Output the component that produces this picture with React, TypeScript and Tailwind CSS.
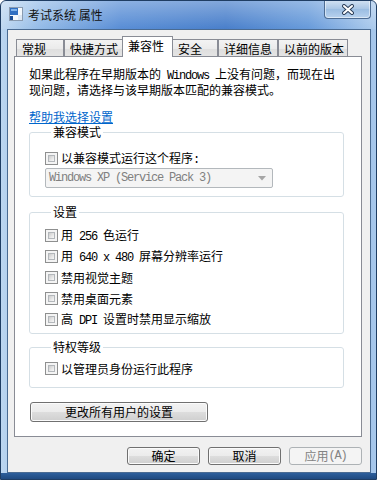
import type { ReactNode } from "react";

// Half-width ascii, like SimSun's latin glyphs (6px advance at 12px)
function M({ children }: { children: ReactNode }) {
	return <span className="font-['Liberation_Mono',monospace] tracking-[-1.2px]">{children}</span>;
}

function CheckBox() {
	return (
		<div className="h-[13px] w-[13px] shrink-0 border border-[#8e8f8f] bg-[#f4f4f4] p-[2px]">
			<div className="h-full w-full border border-[#b3b7bb] bg-[linear-gradient(135deg,#cbcbcb_0%,#e6e6e6_55%,#f8f8f8_100%)]" />
		</div>
	);
}

function CheckRow({ children }: { children: ReactNode }) {
	return (
		<div className="flex h-[13px] items-center gap-[3px] leading-[13px]">
			<CheckBox />
			<span className="whitespace-nowrap">{children}</span>
		</div>
	);
}

function Group({ title, children, className }: { title: string; children: ReactNode; className?: string }) {
	return (
		<fieldset className={`rounded-[3px] border border-[#d5dfe5] pl-[15px] ${className ?? ""}`}>
			<legend className="ml-[6px] px-[2px] leading-[14px]">{title}</legend>
			{children}
		</fieldset>
	);
}

const tabs = [
	{ label: "常规", w: "w-[48px]" },
	{ label: "快捷方式", w: "w-[59px]" },
	{ label: "兼容性", w: "w-[51px]", active: true },
	{ label: "安全", w: "w-[46px]" },
	{ label: "详细信息", w: "w-[60px]" },
	{ label: "以前的版本", w: "w-[70px]" },
];

const btn =
	"flex items-center justify-center rounded-[3px] border border-[#707070] bg-[linear-gradient(#f2f2f2_0%,#ebebeb_50%,#dddddd_51%,#cfcfcf_100%)] shadow-[inset_0_0_0_1px_#fbfbfb] text-black";

export default function App() {
	return (
		<div className="flex h-[480px] w-[377px] flex-col overflow-hidden rounded-t-[6px] border border-[#1f3d63] bg-[linear-gradient(90deg,#bcd6f0_0%,#8fb8e6_10%,#4f87d3_32%,#3f78c8_60%,#5f95d8_82%,#a9c9ec_100%)] font-['Noto_Sans_CJK_SC',sans-serif] text-[12px] text-black">
			{/* title bar */}
			<div className="flex h-[28px] shrink-0 items-start bg-[linear-gradient(rgba(255,255,255,0.35),rgba(255,255,255,0.05))]">
				<svg className="ml-[7px] mt-[5px]" width="16" height="16" viewBox="0 0 16 16">
					<rect x="1.5" y="1.5" width="13" height="13" fill="#f4f8fc" stroke="#8a9bb0" />
					<rect x="2" y="2" width="8" height="7" fill="#2f6fc2" />
					<rect x="3" y="3" width="6" height="2" fill="#7fb2ea" />
					<rect x="2" y="10" width="3" height="4" fill="#1d4f96" />
					<rect x="10" y="9" width="4" height="5" fill="#dde8f4" />
				</svg>
				<span className="ml-[4px] mt-[6px] leading-[16px] text-[#111]">考试系统 属性</span>
				<div className="-mt-[1px] ml-auto mr-[5px] flex h-[19px] w-[47px] items-center justify-center rounded-b-[4px] border border-t-0 border-[#4d6c93] bg-[linear-gradient(#d4e3f3,#a9c6e6_50%,#9bbde2_51%,#b8d2ee)] shadow-[inset_0_0_0_1px_rgba(255,255,255,0.5)]">
					<svg width="14" height="11" viewBox="0 0 14 11">
						<path d="M3 2 L11 9 M11 2 L3 9" stroke="#2c3f5a" strokeWidth="4" strokeLinecap="round" />
						<path d="M3 2 L11 9 M11 2 L3 9" stroke="#ffffff" strokeWidth="2" strokeLinecap="round" />
					</svg>
				</div>
			</div>

			{/* client */}
			<div className="flex flex-1 pl-[6px] pr-[5px]">
				<div className="flex h-[444px] flex-1 flex-col border border-[#4a6b92] bg-[#f0f0f0]">
					{/* tabs */}
					<div className="mt-[6px] flex h-[21px] items-end pl-[8px]">
						{tabs.map((t) =>
							t.active ? (
								<div
									key={t.label}
									className={`relative z-10 -mx-[1px] h-[21px] ${t.w} border border-b-0 border-[#898c95] bg-white pl-[5px] pt-[2px] leading-[14px]`}
								>
									{t.label}
								</div>
							) : (
								<div
									key={t.label}
									className={`flex h-[18px] ${t.w} items-center border border-b-0 border-[#898c95] bg-[linear-gradient(#f3f3f3,#ebebeb_50%,#dedede_51%,#e5e5e5)] pl-[5px] leading-[14px]`}
								>
									{t.label}
								</div>
							),
						)}
					</div>

					{/* panel */}
					<div className="-mt-[1px] ml-[6px] flex h-[381px] w-[348px] flex-col border border-[#898c95] bg-white pl-[14px] pr-[17px]">
						<p className="mt-[10px] whitespace-nowrap leading-[14px]">
							如果此程序在早期版本的<M> Windows </M>上没有问题，而现在出
							<br />
							现问题，请选择与该早期版本匹配的兼容模式。
						</p>
						<a href="#" className="mt-[13px] self-start leading-[13px] text-[#0066cc] underline">
							帮助我选择设置
						</a>

						<Group title="兼容模式" className="mt-[2px] pb-[8px]">
							<div className="mt-[13px]">
								<CheckRow>
									以兼容模式运行这个程序<M>:</M>
								</CheckRow>
							</div>
							<div className="mt-[3px] flex h-[20px] w-[228px] items-center justify-between rounded-[2px] border border-[#b3b8bc] bg-[#f4f4f4] pl-[3px] pr-[6px] text-[#808080]">
								<M>Windows XP (Service Pack 3)</M>
								<svg width="8" height="5" viewBox="0 0 8 5">
									<path d="M0 0 H8 L4 4.5 Z" fill="#a6a6a6" />
								</svg>
							</div>
						</Group>

						<Group title="设置" className="mt-[8px] pb-[7px]">
							<div className="mt-[10px] flex flex-col gap-[8px]">
								<CheckRow>
									用<M> 256 </M>色运行
								</CheckRow>
								<CheckRow>
									用<M> 640 x 480 </M>屏幕分辨率运行
								</CheckRow>
								<CheckRow>禁用视觉主题</CheckRow>
								<CheckRow>禁用桌面元素</CheckRow>
								<CheckRow>
									高<M> DPI </M>设置时禁用显示缩放
								</CheckRow>
							</div>
						</Group>

						<Group title="特权等级" className="mt-[6px] pb-[12px]">
							<div className="mt-[8px]">
								<CheckRow>以管理员身份运行此程序</CheckRow>
							</div>
						</Group>

						<button type="button" className={`${btn} ml-[1px] mt-[14px] h-[20px] w-[178px]`}>
							更改所有用户的设置
						</button>
					</div>

					{/* dialog buttons */}
					<div className="ml-[119px] mt-[10px] flex gap-[8px]">
						<button type="button" className={`${btn} h-[18px] w-[73px]`}>
							确定
						</button>
						<button type="button" className={`${btn} h-[18px] w-[73px]`}>
							取消
						</button>
						<button
							type="button"
							className="flex h-[18px] w-[73px] items-center justify-center rounded-[3px] border border-[#adb2b5] bg-[#f4f4f4] text-[#838383]"
						>
							应用<M>(A)</M>
						</button>
					</div>
				</div>
			</div>
			<div className="h-[6px] shrink-0 bg-[linear-gradient(#2d5f9c,#1f4a80)]" />
		</div>
	);
}
